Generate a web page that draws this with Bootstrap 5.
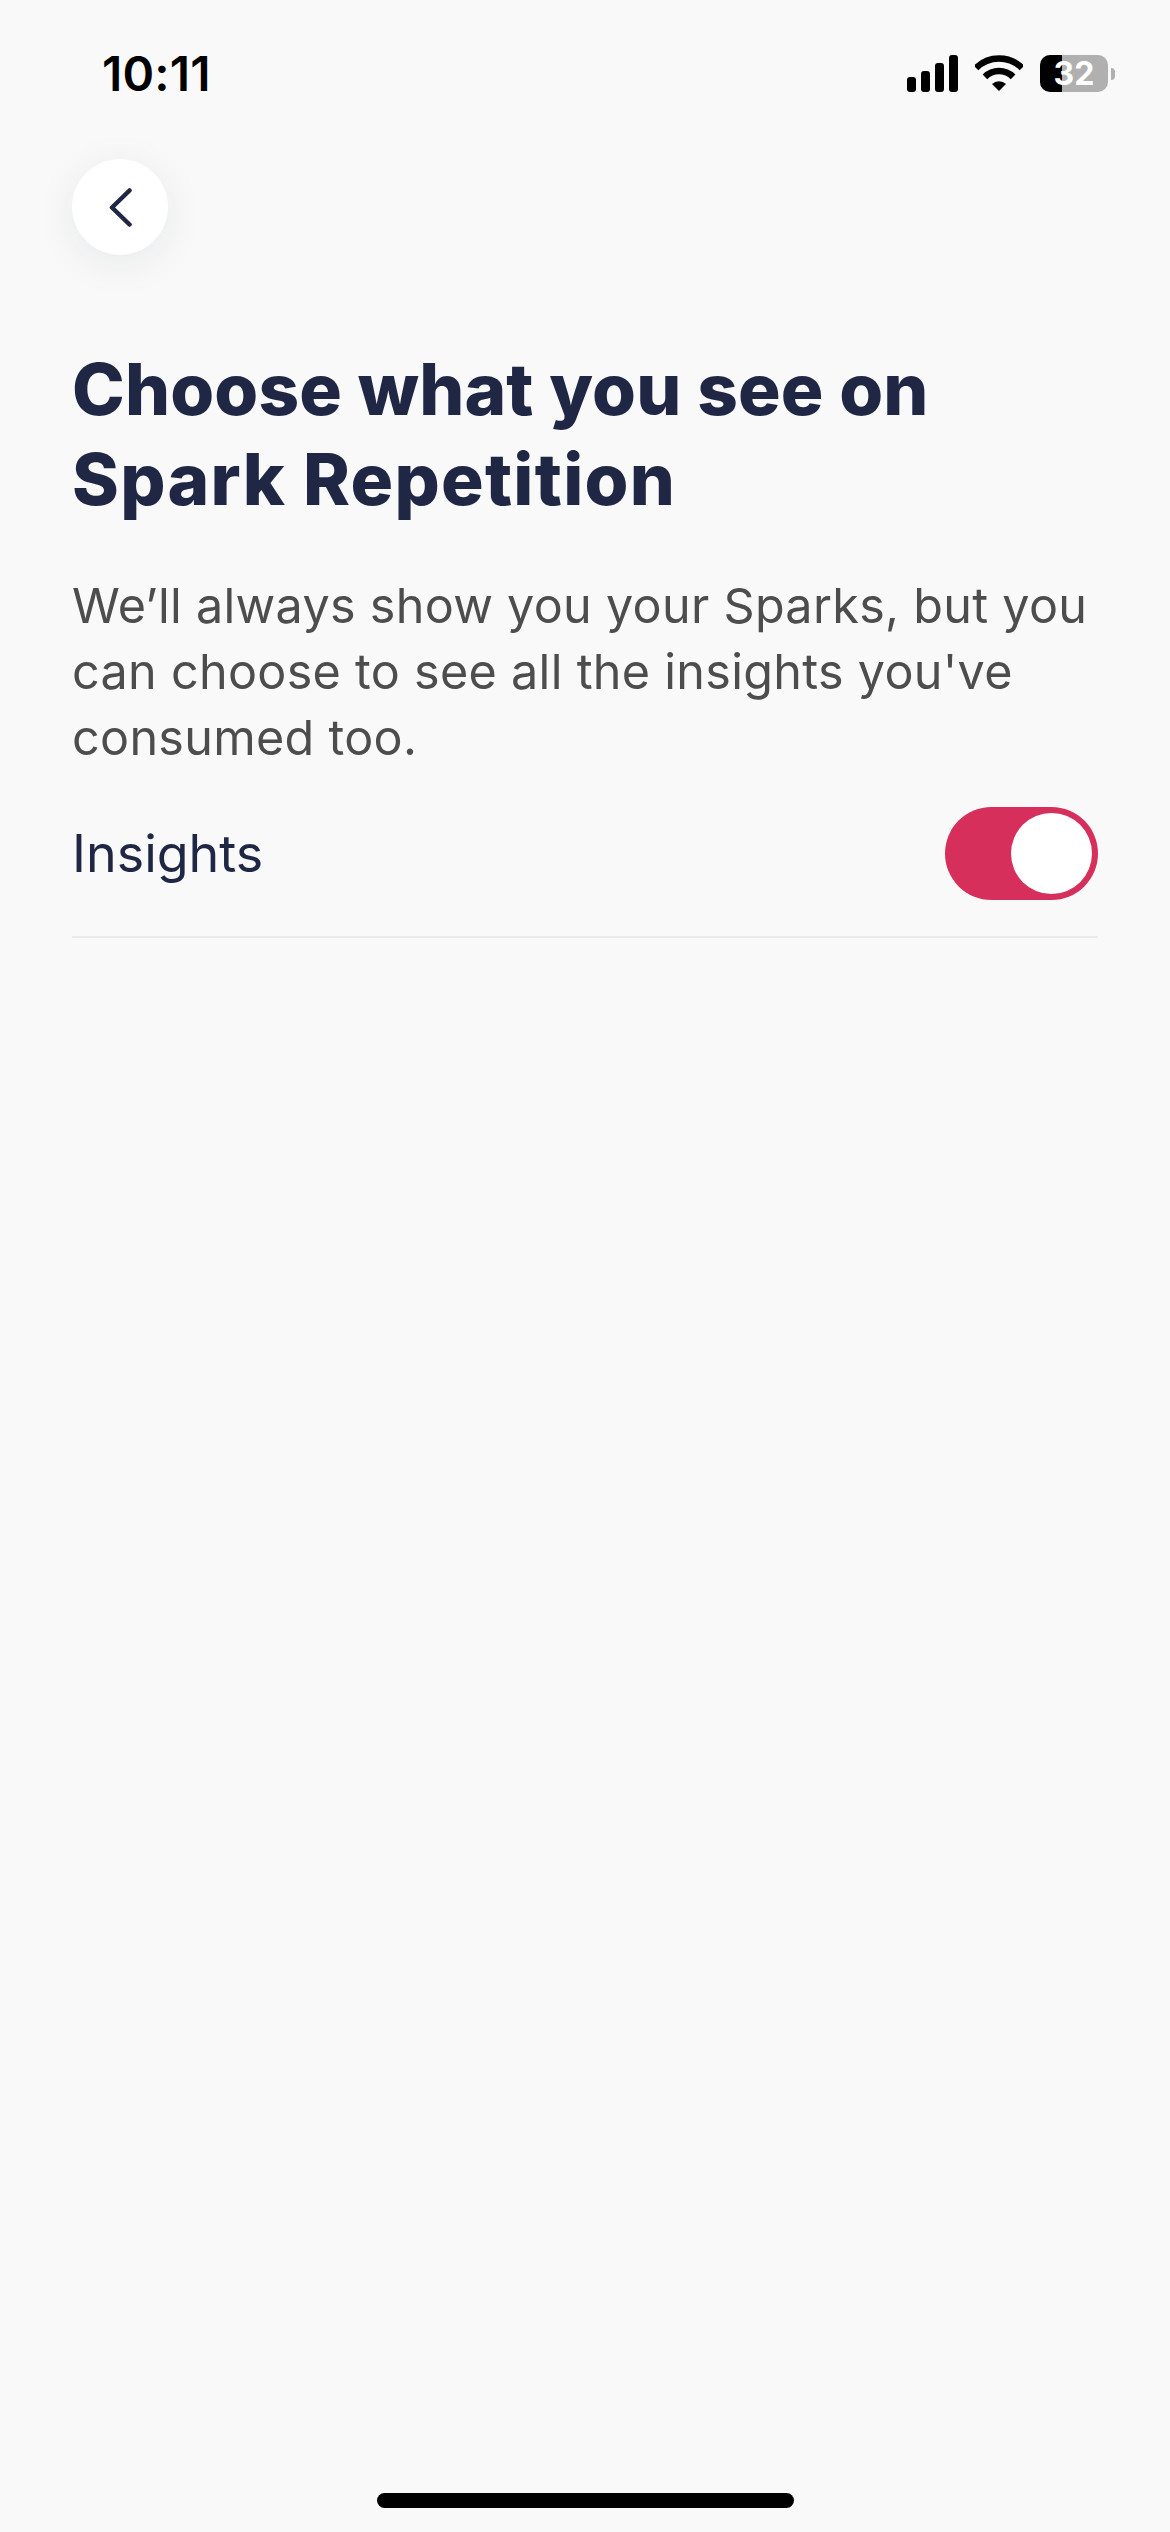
<!DOCTYPE html>
<html lang="en">
<head>
  <meta charset="UTF-8">
  <title>Spark Repetition</title>
  <link href="https://cdn.jsdelivr.net/npm/bootstrap@5.3.3/dist/css/bootstrap.min.css" rel="stylesheet">
  <style>
    html, body { height: 2532px; overflow: hidden; }
    body { background: #f9f9f9; font-family: Inter, "Noto Sans", sans-serif; }
    .screen { height: 2532px; position: relative; }
    .status-bar { height: 159px; padding: 49px 55px 0 102px; }
    .clock { font-size: 48px; line-height: 50px; font-weight: 600; color: #000; letter-spacing: .2px; }
    .status-icons { margin-top: 6px; gap: 17px; }
    .battery-wrap { position: relative; width: 68px; height: 37px; border-radius: 10px; background: #b0b0b0; overflow: hidden; }
    .battery-fill { position: absolute; left: 0; top: 0; bottom: 0; width: 22px; background: #000; }
    .battery-num { position: relative; display: block; text-align: center; color: #fff; font-size: 32px; line-height: 37px; font-weight: 700; }
    .battery-tip { width: 4px; height: 12px; background: #b0b0b0; border-radius: 0 4px 4px 0; margin-left: 3px; }
    .back-round { width: 96px; height: 96px; background: #fff; border-radius: 50%; margin-left: 72px; box-shadow: 0 8px 40px rgba(30, 35, 70, .08); }
    .page-title { margin: 89px 0 0 72px; font-size: 71px; line-height: 90px; font-weight: 800; color: #1f2745; }
    .title-first { letter-spacing: .15px; }
    .title-second { letter-spacing: 1.3px; }
    .page-desc { margin: 49px 72px 0; font-size: 48.5px; line-height: 66px; color: #4d4d4d; letter-spacing: .3px; }
    .opt-row { margin: -1px 72px 0; padding: 37px 0 36px; border-bottom: 2px solid #ebebeb; }
    .opt-label { font-size: 52px; color: #1f2745; }
    .toggle-track { width: 153px; height: 93px; border-radius: 47px; background: #d62f5b; position: relative; }
    .toggle-knob { position: absolute; right: 6px; top: 6px; width: 81px; height: 81px; border-radius: 50%; background: #fff; }
    .home-bar { position: absolute; left: 377px; bottom: 24px; width: 417px; height: 15px; border-radius: 8px; background: #000; }
  </style>
</head>
<body>
<div class="screen">
  <div class="status-bar d-flex justify-content-between align-items-start">
    <span class="clock">10:11</span>
    <div class="status-icons d-flex align-items-center">
      <svg width="51" height="37" viewBox="0 0 51 37"><rect x="0" y="22" width="9" height="15" rx="3"/><rect x="14" y="16" width="9" height="21" rx="3"/><rect x="28" y="8" width="9" height="29" rx="3"/><rect x="42" y="0" width="9" height="37" rx="3"/></svg>
      <svg width="48" height="37" viewBox="0 0 48 37" fill="none" stroke="#000" stroke-width="6.5"><path d="M1 13A32.500 32.500 0 0 1 47 13"/><path d="M9.900 21.900A20 20 0 0 1 38.100 21.900"/><path d="M24 36 17 29A10 10 0 0 1 31 29Z" fill="#000" stroke="none"/></svg>
      <div class="d-flex align-items-center">
        <div class="battery-wrap"><div class="battery-fill"></div><span class="battery-num">32</span></div>
        <div class="battery-tip"></div>
      </div>
    </div>
  </div>
  <div class="back-round d-flex align-items-center justify-content-center">
    <svg width="23" height="39" viewBox="0 0 23 39" fill="none" stroke="#1f2745" stroke-width="4.5" stroke-linecap="round" stroke-linejoin="round"><path d="M20.500 2.500 3 19.500l17.500 17"/></svg>
  </div>
  <h1 class="page-title"><span class="title-first">Choose what you see on</span><br><span class="title-second">Spark Repetition</span></h1>
  <p class="page-desc">We’ll always show you your Sparks, but you can choose to see all the insights you've consumed too.</p>
  <div class="opt-row d-flex justify-content-between align-items-center">
    <span class="opt-label">Insights</span>
    <div class="toggle-track"><div class="toggle-knob"></div></div>
  </div>
  <div class="home-bar"></div>
</div>
<script src="https://cdn.jsdelivr.net/npm/bootstrap@5.3.3/dist/js/bootstrap.bundle.min.js"></script>
</body>
</html>
